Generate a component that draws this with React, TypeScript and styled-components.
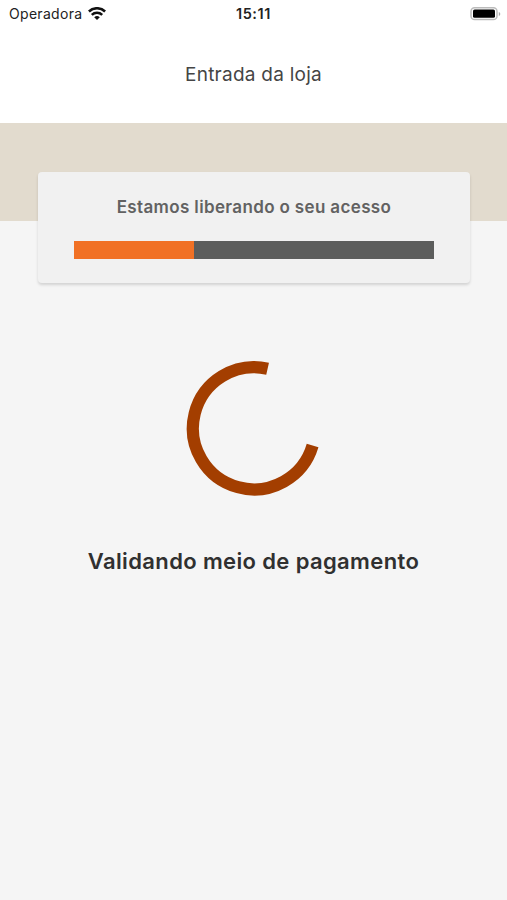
import React from "react";
import styled, { createGlobalStyle } from "styled-components";

const GlobalStyle = createGlobalStyle`
  * { box-sizing: border-box; }
  body { margin: 0; background: #f5f5f5; font-family: Inter, "Liberation Sans", sans-serif; }
`;

const Screen = styled.div`
  display: flex;
  flex-direction: column;
  width: 507px;
  height: 900px;
  overflow: hidden;
  background: #f5f5f5;
`;

const StatusBar = styled.header`
  display: grid;
  grid-template-columns: 1fr auto 1fr;
  align-items: center;
  height: 27px;
  padding: 0 6px 0 9px;
  background: #fff;
  color: #222;
  font-size: 14px;
  line-height: 27px;
`;

const Carrier = styled.div`
  display: flex;
  align-items: center;
  gap: 6px;
  letter-spacing: 0.3px;
`;

const Clock = styled.time`
  margin-right: 3px;
  font-size: 14.5px;
  font-weight: 600;
  letter-spacing: 0.6px;
`;

const Battery = styled.div`
  display: flex;
  justify-content: flex-end;
`;

const NavBar = styled.div`
  display: flex;
  align-items: center;
  justify-content: center;
  height: 96px;
  background: #fff;
`;

const Title = styled.h1`
  margin: 0;
  color: #454545;
  font-size: 19px;
  font-weight: 400;
  line-height: 24px;
  letter-spacing: 0.25px;
`;

const Banner = styled.div`
  flex: none;
  height: 98px;
  padding: 49px 37px 0 38px;
  background: #e2dbce;
`;

const Card = styled.section`
  height: 111px;
  padding: 24px 36px 0;
  border-radius: 4px;
  background: #f1f1f1;
  box-shadow: 0 2px 3px rgba(0, 0, 0, 0.14);
`;

const CardTitle = styled.h2`
  margin: 0 0 23px;
  color: #626262;
  font-size: 17px;
  font-weight: 600;
  line-height: 22px;
  letter-spacing: 0.36px;
  text-align: center;
  white-space: nowrap;
`;

const Track = styled.div`
  height: 18px;
  background: #5c5d5c;
`;

const Fill = styled.div<{ $share: number }>`
  width: ${({ $share }) => $share * 100}%;
  height: 100%;
  background: #f17125;
`;

const Content = styled.main`
  display: flex;
  flex-direction: column;
  align-items: center;
  padding-top: 139px;
`;

const Message = styled.p`
  margin: 51px 0 0;
  color: #303030;
  font-size: 22px;
  font-weight: 600;
  line-height: 28px;
  letter-spacing: 0.37px;
  white-space: nowrap;
`;

const WifiIcon = () => (
  <svg width="18" height="14" viewBox="0 0 18 14" fill="none" stroke="#111" strokeWidth="2.5">
    <path d="M.9 4.5a11.6 11.6 0 0 1 16.2 0" />
    <path d="M3.8 7.9a7.5 7.5 0 0 1 10.4 0" />
    <path d="M6.2 10.3a4 4 0 0 1 5.6 0L9 13Z" fill="#111" stroke="none" />
  </svg>
);

const BatteryIcon = () => (
  <svg width="31" height="14" viewBox="0 0 31 14">
    <rect x="1" y=".8" width="26" height="11.8" rx="3.6" fill="#fff" stroke="#bbb" strokeWidth="1.5" />
    <rect x="3" y="2.6" width="22" height="8.2" rx="1.6" fill="#000" />
    <path d="M28.8 5v4c2-.8 2-3.2 0-4Z" fill="#aaa" />
  </svg>
);

const Spinner = () => (
  <svg width="136" height="136" viewBox="-68 -68.3 136 136" role="progressbar">
    <path d="M13.6 -59.6A61.1 61.1 0 1 0 58.6 17.2" fill="none" stroke="#a33e00" strokeWidth="12.2" />
  </svg>
);

export default function App() {
  return (
    <Screen>
      <GlobalStyle />
      <StatusBar>
        <Carrier>
          <span>Operadora</span>
          <WifiIcon />
        </Carrier>
        <Clock>15:11</Clock>
        <Battery>
          <BatteryIcon />
        </Battery>
      </StatusBar>
      <NavBar>
        <Title>Entrada da loja</Title>
      </NavBar>
      <Banner>
        <Card>
          <CardTitle>Estamos liberando o seu acesso</CardTitle>
          <Track>
            <Fill $share={1 / 3} />
          </Track>
        </Card>
      </Banner>
      <Content>
        <Spinner />
        <Message>Validando meio de pagamento</Message>
      </Content>
    </Screen>
  );
}
